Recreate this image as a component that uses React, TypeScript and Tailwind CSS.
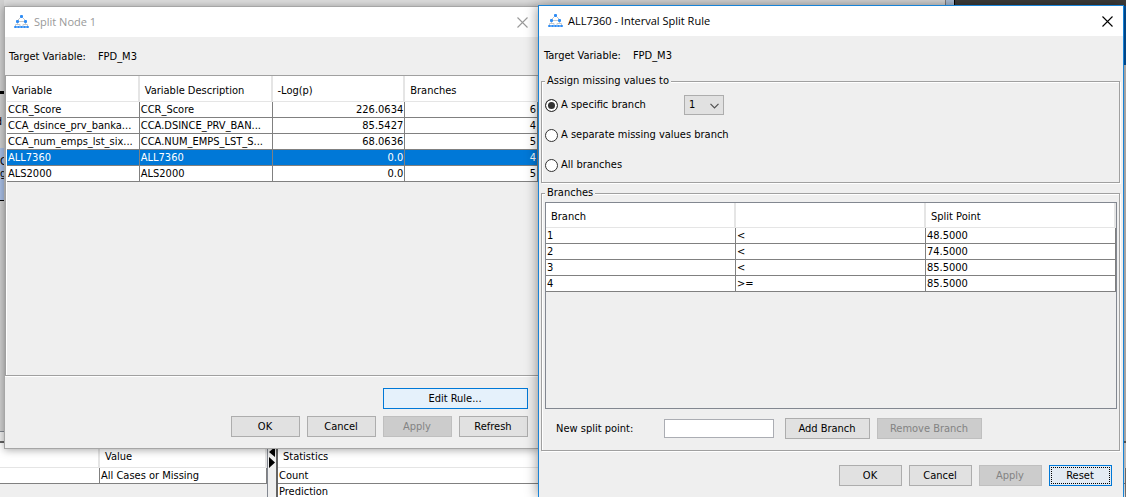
import React, { useState } from 'react';
import clsx from 'clsx';

interface SplitVariable {
  name: string;
  description: string;
  logp: string;
  branches: number;
}

interface BranchRule {
  branch: number;
  operator: string;
  splitPoint: string;
}

const variables: SplitVariable[] = [
  { name: 'CCR_Score', description: 'CCR_Score', logp: '226.0634', branches: 6 },
  { name: 'CCA_dsince_prv_banka...', description: 'CCA.DSINCE_PRV_BAN...', logp: '85.5427', branches: 4 },
  { name: 'CCA_num_emps_lst_six...', description: 'CCA.NUM_EMPS_LST_S...', logp: '68.0636', branches: 5 },
  { name: 'ALL7360', description: 'ALL7360', logp: '0.0', branches: 4 },
  { name: 'ALS2000', description: 'ALS2000', logp: '0.0', branches: 5 },
];

const rules: BranchRule[] = [
  { branch: 1, operator: '<', splitPoint: '48.5000' },
  { branch: 2, operator: '<', splitPoint: '74.5000' },
  { branch: 3, operator: '<', splitPoint: '85.5000' },
  { branch: 4, operator: '>=', splitPoint: '85.5000' },
];

const missingOptions = [
  { id: 'specific', label: 'A specific branch' },
  { id: 'separate', label: 'A separate missing values branch' },
  { id: 'all', label: 'All branches' },
];

const tableClass = 'w-full table-fixed border-separate border-spacing-0 bg-white';
const thClass =
  'border-r-2 border-b border-[#e5e5e5] bg-white pt-1 pl-[5px] text-left font-normal whitespace-nowrap';
const tdClass = 'h-4 overflow-hidden border-r border-b border-[#808080] px-px py-0 leading-[15px] whitespace-nowrap';
const fieldsetClass =
  'mr-[3px] ml-[2px] min-w-0 border border-[#a0a0a0] shadow-[1px_1px_0_#fff,inset_1px_1px_0_#fff]';
const legendClass = 'bg-[#efefef] px-[2px] leading-4';

const TreeIcon = () => (
  <svg width="15" height="14" viewBox="0 0 15 14" aria-hidden="true">
    <path
      d="M6.5 2.5L3.5 5.5M8.5 2.5L11.5 5.5M3.5 7.5V9.5M11.5 7.5V9.5M1.5 11V9.5H6V11M9 11V9.5H13.5V11M4.5 6.5H10.5"
      fill="none"
      stroke="#c3c7cb"
      strokeWidth="1"
    />
    <g fill="#2f8df5">
      <rect x="6" y="0" width="3" height="3" rx="1" />
      <rect x="2" y="5" width="3" height="3" rx="1" />
      <rect x="10" y="5" width="3" height="3" rx="1" />
      <rect x="0" y="11" width="3" height="2" rx="1" />
      <rect x="3" y="11" width="3" height="2" rx="1" />
      <rect x="6" y="11" width="3" height="2" rx="1" />
      <rect x="9" y="11" width="3" height="2" rx="1" />
      <rect x="12" y="11" width="3" height="2" rx="1" />
    </g>
  </svg>
);

const TitleBar: React.FC<{ title: string; active?: boolean }> = ({ title, active }) => (
  <div
    className={clsx(
      'flex h-[30px] shrink-0 items-center bg-white pr-2 pl-[9px]',
      active ? 'text-black' : 'text-[#999999]'
    )}
  >
    <TreeIcon />
    <h2 className='ml-[5px] flex-1 font-["Open_Sans",sans-serif] text-[11px]'>{title}</h2>
    <button type="button" aria-label="Close" className="p-[2px]">
      <svg width="11" height="11" viewBox="0 0 11 11">
        <path d="M0.5 0.5L10.5 10.5M10.5 0.5L0.5 10.5" stroke="currentColor" strokeWidth="1.1" />
      </svg>
    </button>
  </div>
);

interface ButtonProps extends React.ButtonHTMLAttributes<HTMLButtonElement> {
  variant?: 'default' | 'hover' | 'focus';
}

const Button: React.FC<ButtonProps> = ({ variant = 'default', className, ...props }) => (
  <button
    type="button"
    className={clsx(
      'h-[21px] border pr-px text-center leading-4 disabled:border-[#bfbfbf] disabled:bg-[#cccccc] disabled:text-[#838383]',
      variant === 'default' && 'border-[#adadad] bg-[#e1e1e1]',
      variant === 'hover' && 'border-[#0078d7] bg-[#e5f1fb]',
      variant === 'focus' &&
        'border-[#0078d7] bg-[#e3ebf3] outline-1 -outline-offset-3 outline-black outline-dotted',
      className
    )}
    {...props}
  />
);

const SplitNodeWindow = () => {
  const [selected, setSelected] = useState('ALL7360');

  return (
    <section className="absolute top-[6px] left-1 w-[535px] border border-[#a6a6a6] bg-[#efefef] shadow-[0_1px_8px_rgba(0,0,0,0.35)]">
      <TitleBar title="Split Node 1" />
      <p className="flex h-[38px] items-center gap-3 pt-[2px] pl-1">
        <span>Target Variable:</span>
        <span>FPD_M3</span>
      </p>
      <div className="h-[301px] border-y border-l border-[#a0a0a0] pl-px shadow-[0_1px_0_#fff,inset_1px_0_0_#fff]">
        <table className={tableClass}>
          <thead>
            <tr className="h-[26px]">
              <th className={thClass}>Variable</th>
              <th className={thClass}>Variable Description</th>
              <th className={thClass}>-Log(p)</th>
              <th className={thClass}>Branches</th>
            </tr>
          </thead>
          <tbody>
            {variables.map((v) => (
              <tr
                key={v.name}
                onClick={() => setSelected(v.name)}
                className={clsx(v.name === selected && 'bg-[#0078d7] text-white')}
              >
                <td className={tdClass}>{v.name}</td>
                <td className={tdClass}>{v.description}</td>
                <td className={clsx(tdClass, 'text-right')}>{v.logp}</td>
                <td className={clsx(tdClass, 'text-right')}>{v.branches}</td>
              </tr>
            ))}
          </tbody>
        </table>
      </div>
      <div className="flex flex-col items-end gap-[7px] pt-3 pr-[10px] pb-[11px]">
        <Button variant="hover" className="w-[145px]">
          Edit Rule...
        </Button>
        <div className="flex gap-[7px]">
          <Button className="w-[69px]">OK</Button>
          <Button className="w-[69px]">Cancel</Button>
          <Button className="w-[69px]" disabled>
            Apply
          </Button>
          <Button className="w-[69px]">Refresh</Button>
        </div>
      </div>
    </section>
  );
};

const SplitRuleWindow = () => {
  const [missing, setMissing] = useState('specific');
  const [splitPoint, setSplitPoint] = useState('');

  return (
    <section className="absolute top-[5px] right-[2px] bottom-0 left-[538px] flex flex-col border border-b-0 border-[#1883d7] bg-[#efefef] shadow-[0_0_12px_rgba(0,0,0,0.45)]">
      <TitleBar title="ALL7360 - Interval Split Rule" active />
      <p className="flex h-[37px] shrink-0 items-center gap-3 pt-[2px] pl-[5px]">
        <span>Target Variable:</span>
        <span>FPD_M3</span>
      </p>

      <fieldset className={clsx(fieldsetClass, 'pt-px pb-[2px] pl-[3px]')}>
        <legend className={legendClass}>Assign missing values to</legend>
        {missingOptions.map((option) => (
          <div key={option.id} className="flex h-[30px] items-center">
            <label className="flex w-[139px] items-center gap-[3px] whitespace-nowrap">
              <input
                type="radio"
                name="missing"
                checked={missing === option.id}
                onChange={() => setMissing(option.id)}
                className="size-[13px] shrink-0 appearance-none rounded-full border border-[#333333] bg-white checked:bg-[#333333] checked:shadow-[inset_0_0_0_2px_#fff]"
              />
              {option.label}
            </label>
            {option.id === 'specific' && (
              <div className="relative">
                <select
                  aria-label="Branch"
                  className="block h-5 w-10 appearance-none border border-[#adadad] bg-[#e1e1e1] pl-1 leading-4"
                >
                  {rules.map((r) => (
                    <option key={r.branch}>{r.branch}</option>
                  ))}
                </select>
                <svg
                  className="pointer-events-none absolute top-2 right-[5px]"
                  width="9"
                  height="6"
                  viewBox="0 0 9 6"
                >
                  <path d="M0.5 0.8L4.5 4.8L8.5 0.8" fill="none" stroke="#505050" strokeWidth="1.2" />
                </svg>
              </div>
            )}
          </div>
        ))}
      </fieldset>

      <fieldset className={clsx(fieldsetClass, 'mt-[2px] flex flex-1 flex-col pr-[2px] pl-[3px]')}>
        <legend className={legendClass}>Branches</legend>
        <div className="mt-px flex-1 border border-[#828790]">
          <table className={tableClass}>
            <thead>
              <tr className="h-[25px]">
                <th className={thClass}>Branch</th>
                <th className={thClass} aria-label="Operator" />
                <th className={thClass}>Split Point</th>
              </tr>
            </thead>
            <tbody>
              {rules.map((r) => (
                <tr key={r.branch}>
                  <td className={tdClass}>{r.branch}</td>
                  <td className={tdClass}>{r.operator}</td>
                  <td className={tdClass}>{r.splitPoint}</td>
                </tr>
              ))}
            </tbody>
          </table>
        </div>
        <div className="flex items-center pt-[9px] pb-[11px] pl-[11px]">
          <label htmlFor="split-point" className="w-[108px]">
            New split point:
          </label>
          <input
            id="split-point"
            type="text"
            value={splitPoint}
            onChange={(e) => setSplitPoint(e.target.value)}
            className="h-[19px] w-[110px] border border-[#abadb3] bg-white px-1"
          />
          <Button className="ml-[11px] w-[85px]">Add Branch</Button>
          <Button className="ml-[7px] w-[105px]" disabled>
            Remove Branch
          </Button>
        </div>
      </fieldset>

      <div className="flex justify-end gap-[7px] pt-[14px] pr-[11px] pb-[11px]">
        <Button className="w-[63px]">OK</Button>
        <Button className="w-[63px]">Cancel</Button>
        <Button className="w-[63px]" disabled>
          Apply
        </Button>
        <Button variant="focus" className="w-[63px]">
          Reset
        </Button>
      </div>
    </section>
  );
};

// Main window left visible behind the two dialogs
const Backdrop = () => (
  <div className="flex h-full flex-col">
    <div className="flex flex-1">
      <div className="flex w-[945px] flex-col bg-[#dcdcdc]">
        <div className="w-1 flex-1 overflow-hidden bg-[#d0d0d0]">
          <div className="mt-[91px] h-[3px] bg-black" />
          <div className="mt-5 mb-[18px] flex h-4 justify-end pr-[2px]">d</div>
          <div className="h-[53px] border-b border-black bg-[#a9bfe6] pt-2 leading-3">
            C<br />g
          </div>
        </div>
        <div className="h-[10px] border-t border-[#828790] bg-[#efefef]" />
      </div>
      <div className="w-[9px] border-l border-[#808080] bg-[#b0c4de]" />
      <div className="flex flex-1 flex-col border-l border-black bg-[#3f3e3c]">
        <div className="h-[65px] border-t-[6px] border-[#3f3e3c] bg-[#0057a8]" />
        <div className="flex-1 bg-[#cccccc]" />
      </div>
    </div>
    <div className="flex h-14 shrink-0 overflow-hidden border-t-2 border-[#646464] bg-[#efefef]">
      <div className="w-[268px] border-r border-[#828790]">
        <table className={tableClass}>
          <thead>
            <tr className="h-[25px]">
              <th className={clsx(thClass, 'w-[100px]')} aria-label="Name" />
              <th className={thClass}>Value</th>
            </tr>
          </thead>
          <tbody>
            <tr>
              <td className={tdClass} />
              <td className={tdClass}>All Cases or Missing</td>
            </tr>
          </tbody>
        </table>
      </div>
      <svg width="8" height="26" viewBox="0 0 8 26" aria-hidden="true">
        <path d="M7 4V14L1 9ZM1 14V25L7 19.5Z" fill="#000" />
      </svg>
      <div className="flex-1 border-l-2 border-[#646464]">
        <table className={tableClass}>
          <thead>
            <tr className="h-[25px]">
              <th className={thClass}>Statistics</th>
            </tr>
          </thead>
          <tbody>
            <tr>
              <td className={tdClass}>Count</td>
            </tr>
            <tr>
              <td className={tdClass}>Prediction</td>
            </tr>
          </tbody>
        </table>
      </div>
    </div>
  </div>
);

export default function App() {
  return (
    <main className='relative h-screen min-h-[460px] overflow-hidden bg-[#dcdcdc] font-["DejaVu_Sans_Condensed",sans-serif] text-[11px] leading-4 text-black'>
      <Backdrop />
      <SplitNodeWindow />
      <SplitRuleWindow />
    </main>
  );
}
